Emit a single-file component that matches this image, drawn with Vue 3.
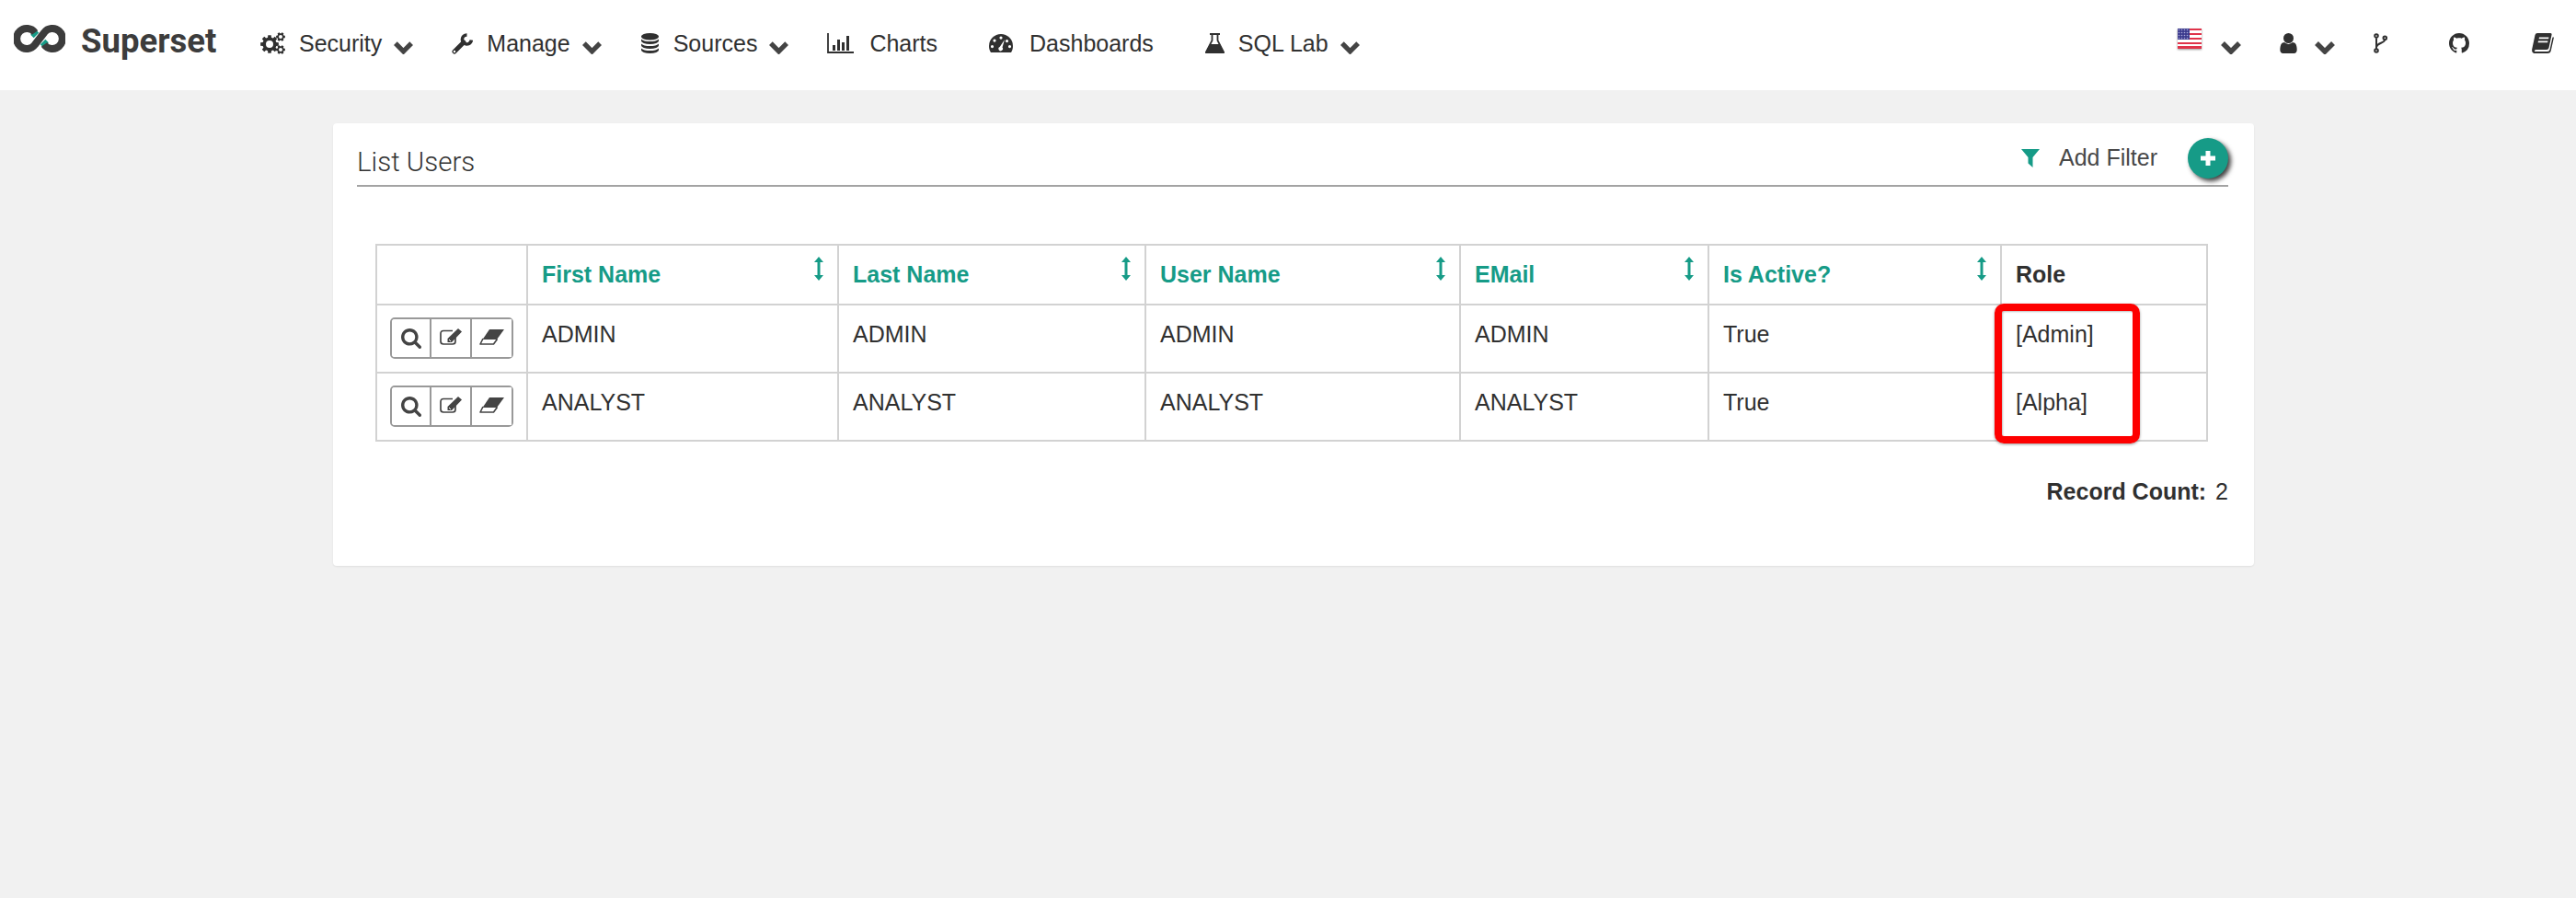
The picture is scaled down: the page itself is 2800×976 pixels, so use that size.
<script setup>
// gear outline with a hole in the middle, used three times in the Security icon
function gear(cx, cy, R, teeth, hole) {
  const pts = []
  const inner = R * 0.76
  const step = (Math.PI * 2) / teeth
  for (let i = 0; i < teeth; i++) {
    const a = i * step
    const w = step * 0.22
    const list = [
      [inner, a - w * 1.5],
      [R, a - w],
      [R, a + w],
      [inner, a + w * 1.5]
    ]
    list.forEach(([r, t]) => pts.push(`${(cx + r * Math.cos(t)).toFixed(2)} ${(cy + r * Math.sin(t)).toFixed(2)}`))
  }
  const ring = `M${cx - hole} ${cy}a${hole} ${hole} 0 1 0 ${hole * 2} 0a${hole} ${hole} 0 1 0 ${-hole * 2} 0z`
  return `M${pts.join('L')}z${ring}`
}

const line = { fill: 'none', stroke: 'currentColor' }

const icons = {
  gears: {
    vb: '0 0 27 24',
    shapes: [
      { d: gear(10, 13, 10, 8, 4), 'fill-rule': 'evenodd' },
      { d: gear(22, 5, 5, 6, 2), 'fill-rule': 'evenodd' },
      { d: gear(22, 19, 5, 6, 2), 'fill-rule': 'evenodd' }
    ]
  },
  wrench: {
    vb: '0 0 23 23',
    shapes: [
      { d: 'M3 20L13 10', ...line, 'stroke-width': 5, 'stroke-linecap': 'round' },
      { d: 'M16.5 2A5 5 0 1 0 21.4 7.5', ...line, 'stroke-width': 3.6 },
      { d: 'M3 18.800a1.200 1.200 0 1 0 0 2.400a1.200 1.200 0 1 0 0-2.400z', fill: '#fff' }
    ]
  },
  database: {
    vb: '0 0 21 23',
    shapes: [
      { d: 'M1 3.500a9.500 3.500 0 0 1 19 0v.5a9.500 3.500 0 0 1-19 0z' },
      { d: 'M1 6.500c2.500 3.400 16.500 3.400 19 0v2a9.500 3.500 0 0 1-19 0z' },
      { d: 'M1 11.500c2.500 3.400 16.500 3.400 19 0v2a9.500 3.500 0 0 1-19 0z' },
      { d: 'M1 16.500c2.500 3.400 16.500 3.400 19 0v2a9.500 3.500 0 0 1-19 0z' }
    ]
  },
  chart: {
    vb: '0 0 29 22',
    shapes: [
      { d: 'M1 0V21H29', ...line, 'stroke-width': 1.8 },
      { d: 'M6 13h3v6H6zM11 7h3v12h-3zM16 10h3v9h-3zM21 3h3v16h-3z' }
    ]
  },
  dashboard: {
    vb: '0 0 26 20',
    shapes: [
      { d: 'M13 0A13 13 0 0 0 0 13C0 16 .8 18 2 20H24C25.200 18 26 16 26 13A13 13 0 0 0 13 0Z' },
      {
        d: 'M13 2.500a1.600 1.600 0 1 0 0 3.200a1.600 1.600 0 1 0 0-3.200zM6 5.500a1.600 1.600 0 1 0 0 3.200a1.600 1.600 0 1 0 0-3.200zM3.500 12a1.600 1.600 0 1 0 0 3.200a1.600 1.600 0 1 0 0-3.200zM22.500 12a1.600 1.600 0 1 0 0 3.200a1.600 1.600 0 1 0 0-3.200zM19.500 6a1.600 1.600 0 1 0 0 3.200a1.600 1.600 0 1 0 0-3.200z',
        fill: '#fff'
      },
      { d: 'M17 6L14.500 14.500a2.300 2.300 0 1 1-2.800-.6z', fill: '#fff' }
    ]
  },
  flask: {
    vb: '0 0 21 22',
    shapes: [
      { d: 'M5 1H16', ...line, 'stroke-width': 2 },
      { d: 'M7.500 1V8L1 20.500H20L13.500 8V1', ...line, 'stroke-width': 1.8 },
      { d: 'M5 12H16L21 22H0Z' }
    ]
  },
  user: {
    vb: '256 128 1280 1536',
    shapes: [
      {
        d: 'M1536 1399q0 109-62.500 187t-150.500 78h-854q-88 0-150.500-78t-62.500-187q0-85 8.500-160.500t31.500-152 58.500-131 94-89 134.500-34.500q131 128 313 128t313-128q76 0 134.500 34.500t94 89 58.500 131 31.500 152 8.500 160.500zm-256-887q0 159-112.500 271.500t-271.500 112.500-271.500-112.500-112.500-271.500 112.500-271.500 271.500-112.500 271.500 112.500 112.500 271.500z'
      }
    ]
  },
  fork: {
    vb: '0 0 15 22',
    shapes: [
      {
        d: 'M3 1.200a1.800 1.800 0 1 0 0 3.600a1.800 1.800 0 1 0 0-3.600zM12.300 3.400a1.800 1.800 0 1 0 0 3.600a1.800 1.800 0 1 0 0-3.600zM3 17.200a1.800 1.800 0 1 0 0 3.600a1.800 1.800 0 1 0 0-3.600zM3 4.800V17.200M12.300 7C12 11 4 10.500 3 15',
        ...line,
        'stroke-width': 2
      }
    ]
  },
  github: {
    vb: '0 0 16 16',
    shapes: [
      {
        d: 'M8 0C3.580 0 0 3.580 0 8c0 3.540 2.290 6.530 5.470 7.590.4.070.55-.17.55-.38 0-.19-.01-.82-.01-1.490-2.010.37-2.530-.49-2.690-.94-.09-.23-.48-.94-.82-1.130-.28-.15-.68-.52-.01-.53.63-.01 1.080.58 1.230.82.72 1.210 1.870.87 2.330.66.07-.52.28-.87.51-1.070-1.780-.2-3.640-.89-3.640-3.950 0-.87.31-1.590.82-2.150-.08-.2-.36-1.020.08-2.120 0 0 .67-.21 2.200.82.64-.18 1.320-.27 2-.27.68 0 1.360.09 2 .27 1.530-1.040 2.200-.82 2.200-.82.44 1.100.16 1.920.08 2.120.51.56.82 1.270.82 2.150 0 3.070-1.870 3.750-3.650 3.950.29.25.54.73.54 1.480 0 1.070-.01 1.930-.01 2.200 0 .21.15.46.55.38A8.013 8.013 0 0016 8c0-4.420-3.580-8-8-8z'
      }
    ]
  },
  book: {
    vb: '0 0 24 22',
    shapes: [
      { d: 'M6 0H20Q22 0 21.500 2L18.500 16Q18 18 16 18H5Q2.500 18 3 20H17Q19 20 19.500 18L22.500 4.500H24L20.800 19Q20.300 22 17 22H4Q-.5 22 .2 17.500L3.500 2Q4 0 6 0Z' },
      { d: 'M8 4.500H18.500L18.100 6.200H7.600ZM7 8.500H17.500L17.100 10.200H6.600Z', fill: '#fff' }
    ]
  },
  search: {
    vb: '64 128 1664 1664',
    shapes: [
      {
        d: 'M1216 832q0-185-131.500-316.500t-316.500-131.500-316.500 131.500-131.500 316.500 131.500 316.500 316.500 131.500 316.500-131.500 131.500-316.500zm512 832q0 52-38 90t-90 38q-54 0-90-38l-343-342q-179 124-399 124-143 0-273.500-55.500t-225-150-150-225-55.500-273.500 55.500-273.500 150-225 225-150 273.500-55.500 273.500 55.500 225 150 150 225 55.500 273.500q0 220-124 399l343 343q37 37 37 90z'
      }
    ]
  },
  edit: {
    vb: '0 0 24 18',
    shapes: [
      { d: 'M14 2.500H4Q1 2.500 1 5.500V14Q1 17 4 17H14Q17 17 17 14V10', ...line, 'stroke-width': 1.7 },
      { d: 'M20 0L24 3.500L13 15H8.500V11Z' },
      { d: 'M10 12L12 14', fill: 'none', stroke: '#fff', 'stroke-width': 1 }
    ]
  },
  eraser: {
    vb: '0 0 27 17',
    shapes: [
      { d: 'M11 0H27L19 11H3.500Z' },
      { d: 'M4 10L1 16H15.500L19.500 10.500', ...line, 'stroke-width': 1.6, 'stroke-linejoin': 'round' }
    ]
  }
}

const leftMenu = [
  { label: 'Security', icon: 'gears', w: 27, h: 24, gap: 15, caret: true },
  { label: 'Manage', icon: 'wrench', w: 23, h: 23, gap: 15, caret: true },
  { label: 'Sources', icon: 'database', w: 21, h: 23, gap: 15, caret: true },
  { label: 'Charts', icon: 'chart', w: 29, h: 22, gap: 17, caret: false },
  { label: 'Dashboards', icon: 'dashboard', w: 26, h: 20, gap: 18, caret: false },
  { label: 'SQL Lab', icon: 'flask', w: 21, h: 22, gap: 15, caret: true }
]

const columns = [
  { label: 'First Name', sortable: true },
  { label: 'Last Name', sortable: true },
  { label: 'User Name', sortable: true },
  { label: 'EMail', sortable: true },
  { label: 'Is Active?', sortable: true },
  { label: 'Role', sortable: false }
]

const users = [
  { first: 'ADMIN', last: 'ADMIN', name: 'ADMIN', email: 'ADMIN', active: 'True', role: '[Admin]' },
  { first: 'ANALYST', last: 'ANALYST', name: 'ANALYST', email: 'ANALYST', active: 'True', role: '[Alpha]' }
]

const actions = ['search', 'edit', 'eraser']
</script>

<template>
  <div class="page">
    <header class="navbar">
      <a class="brand">
        <svg class="logo" viewBox="0 0 56 30" width="56" height="30">
          <path d="M21 8L35 22" fill="none" stroke="#169b87" stroke-width="8" />
          <path d="M21 22L35 8" fill="none" stroke="#fff" stroke-width="10" />
          <path
            d="M23 8.500A11 11 0 1 0 23 21.500L33 8.500A11 11 0 1 1 33 21.500"
            fill="none"
            stroke="#3c3c3c"
            stroke-width="8"
          />
        </svg>
        <span class="brand-name">Superset</span>
      </a>

      <nav class="menu">
        <a v-for="item in leftMenu" :key="item.label" class="menu-item" :class="{ plain: !item.caret }">
          <svg
            class="icon"
            :viewBox="icons[item.icon].vb"
            :width="item.w"
            :height="item.h"
            :style="{ marginRight: item.gap + 'px' }"
          >
            <path v-for="(s, i) in icons[item.icon].shapes" :key="i" v-bind="s" />
          </svg>
          <span>{{ item.label }}</span>
          <svg v-if="item.caret" class="caret" viewBox="0 0 24 16" width="23" height="16">
            <path d="M3 4L12 13L21 4" fill="none" stroke="currentColor" stroke-width="5.500" />
          </svg>
        </a>
      </nav>

      <nav class="menu-right">
        <svg class="flag" viewBox="0 0 26 22" width="26" height="22">
          <defs>
            <pattern id="stars" width="3" height="3" patternUnits="userSpaceOnUse">
              <rect width="3" height="3" fill="#3c3b8e" />
              <circle cx="1.500" cy="1.500" r=".8" fill="#a9a9d8" />
            </pattern>
          </defs>
          <rect width="26" height="22" rx="1" fill="#fff" />
          <rect y="0" width="26" height="2" fill="#e0334a" />
          <rect y="5" width="26" height="2" fill="#e0334a" />
          <rect y="10" width="26" height="2" fill="#e0334a" />
          <rect y="15" width="26" height="2" fill="#e0334a" />
          <rect y="19" width="26" height="3" fill="#e0334a" />
          <rect width="13" height="12" fill="url(#stars)" />
        </svg>
        <svg class="caret caret-lang" viewBox="0 0 24 16" width="24" height="16">
          <path d="M3 4L12 13L21 4" fill="none" stroke="currentColor" stroke-width="5.500" />
        </svg>
        <svg class="icon icon-user" :viewBox="icons.user.vb" width="19" height="22">
          <path v-for="(s, i) in icons.user.shapes" :key="i" v-bind="s" />
        </svg>
        <svg class="caret caret-user" viewBox="0 0 24 16" width="24" height="16">
          <path d="M3 4L12 13L21 4" fill="none" stroke="currentColor" stroke-width="5.500" />
        </svg>
        <svg class="icon icon-fork" :viewBox="icons.fork.vb" width="15" height="22">
          <path v-for="(s, i) in icons.fork.shapes" :key="i" v-bind="s" />
        </svg>
        <svg class="icon icon-github" :viewBox="icons.github.vb" width="22" height="22">
          <path v-for="(s, i) in icons.github.shapes" :key="i" v-bind="s" />
        </svg>
        <svg class="icon icon-book" :viewBox="icons.book.vb" width="24" height="22">
          <path v-for="(s, i) in icons.book.shapes" :key="i" v-bind="s" />
        </svg>
      </nav>
    </header>

    <main class="content">
      <section class="card">
        <div class="card-head">
          <h4 class="card-title">List Users</h4>
          <div class="filter-tools">
            <svg class="filter-icon" viewBox="0 0 20 20" width="20" height="20">
              <path d="M0 0H20L12.500 9V20L7.500 15.500V9Z" />
            </svg>
            <span class="filter-label">Add Filter</span>
            <button class="add-btn">
              <svg viewBox="0 0 20 20" width="20" height="20">
                <path d="M10 2V18M2 10H18" fill="none" stroke="#fff" stroke-width="5" />
              </svg>
            </button>
          </div>
        </div>

        <div class="table-wrap">
          <table class="users">
            <colgroup>
              <col class="c-actions" />
              <col class="c-first" />
              <col class="c-last" />
              <col class="c-name" />
              <col class="c-email" />
              <col class="c-active" />
              <col class="c-role" />
            </colgroup>
            <thead>
              <tr>
                <th></th>
                <th v-for="col in columns" :key="col.label" :class="{ link: col.sortable }">
                  <div class="th-inner">
                    <span>{{ col.label }}</span>
                    <svg v-if="col.sortable" class="sort" viewBox="0 0 10 26" width="10" height="26">
                      <path d="M5 0L10 6H6.500V20H10L5 26L0 20H3.500V6H0Z" />
                    </svg>
                  </div>
                </th>
              </tr>
            </thead>
            <tbody>
              <tr v-for="u in users" :key="u.first">
                <td class="actions">
                  <div class="btn-group">
                    <button v-for="a in actions" :key="a" class="act" :class="a">
                      <svg :viewBox="icons[a].vb" class="act-icon">
                        <path v-for="(s, i) in icons[a].shapes" :key="i" v-bind="s" />
                      </svg>
                    </button>
                  </div>
                </td>
                <td>{{ u.first }}</td>
                <td>{{ u.last }}</td>
                <td>{{ u.name }}</td>
                <td>{{ u.email }}</td>
                <td>{{ u.active }}</td>
                <td>{{ u.role }}</td>
              </tr>
            </tbody>
          </table>
          <div class="highlight"></div>
        </div>

        <div class="record-count"><b>Record Count:</b> 2</div>
      </section>
    </main>
  </div>
</template>

<style>
html,
body {
  margin: 0;
  background: #f1f1f1;
}
</style>

<style scoped>
.page {
  min-height: 976px;
  background: #f1f1f1;
  font-family: "Liberation Sans", Arial, sans-serif;
  font-size: 25px;
  line-height: 36px;
  color: #303030;
}

.navbar {
  height: 98px;
  background: #fff;
  display: flex;
  align-items: center;
  padding: 0 24px 0 15px;
  box-sizing: border-box;
}

.brand {
  display: flex;
  align-items: center;
  gap: 17px;
  margin-top: -14px;
}

.logo {
  display: block;
}

.brand-name {
  font-family: Roboto, "Liberation Sans", sans-serif;
  font-weight: 700;
  font-size: 36.500px;
  color: #3c3c3c;
  width: 149px;
  margin-top: 5px;
  white-space: nowrap;
}

.menu {
  display: flex;
  align-items: center;
  margin-left: 46px;
  margin-top: -4px;
}

.menu-item {
  display: flex;
  align-items: center;
  margin-right: 41px;
  white-space: nowrap;
}

.menu-item.plain {
  margin-right: 56px;
}

.icon {
  display: block;
  fill: currentColor;
  flex: none;
}

.caret {
  display: block;
  flex: none;
  color: #444;
  margin-left: 12px;
  margin-top: 8px;
}

.menu-right {
  margin-left: auto;
  display: flex;
  align-items: center;
  margin-top: -4px;
}

.flag {
  display: block;
  margin-top: -10px;
  filter: drop-shadow(0 1px 1px rgba(0, 0, 0, 0.4));
}

.caret-lang {
  margin-left: 20px;
  margin-top: 8px;
}

.icon-user {
  margin-left: 41px;
}

.caret-user {
  margin-left: 18px;
}

.icon-fork {
  margin-left: 41px;
}

.icon-github {
  margin-left: 67px;
}

.icon-book {
  margin-left: 68px;
}

.content {
  padding-top: 36px;
  display: flex;
  justify-content: center;
}

.card {
  width: 2088px;
  margin-left: 12px;
  box-sizing: border-box;
  background: #fff;
  border-radius: 4px;
  padding: 16px 28px 63px 26px;
  box-shadow: 0 1px 2px rgba(0, 0, 0, 0.08);
}

.card-head {
  display: flex;
  align-items: flex-end;
  justify-content: space-between;
  height: 51px;
  border-bottom: 2px solid #a3a3a3;
}

.card-title {
  margin: 0 0 7px 0;
  font-family: Roboto, "Liberation Sans", sans-serif;
  font-weight: 300;
  font-size: 29.500px;
  line-height: 36px;
  color: #333;
}

.filter-tools {
  display: flex;
  align-items: flex-start;
  height: 51px;
}

.filter-icon {
  display: block;
  fill: #169b87;
  margin-top: 12px;
  margin-right: 21px;
}

.filter-label {
  color: #484848;
  margin-top: 3px;
  margin-right: 33px;
}

.add-btn {
  width: 44px;
  height: 44px;
  padding: 0;
  border: none;
  border-radius: 50%;
  background: #169b87;
  display: flex;
  align-items: center;
  justify-content: center;
  box-shadow: 3px 3px 5px rgba(0, 0, 0, 0.75);
}

.table-wrap {
  position: relative;
  margin: 62px 22px 0 20px;
}

.users {
  width: 1992px;
  table-layout: fixed;
  border-collapse: collapse;
}

.c-actions { width: 164px; }
.c-first { width: 338px; }
.c-last { width: 334px; }
.c-name { width: 342px; }
.c-email { width: 270px; }
.c-active { width: 318px; }
.c-role { width: 224px; }

.users th,
.users td {
  border: 2px solid #d2d2d2;
  padding: 13px 15px 0;
  vertical-align: top;
  text-align: left;
  box-sizing: border-box;
}

.users th {
  height: 65px;
  font-weight: 700;
}

.users td {
  height: 74px;
}

.users th.link {
  color: #169b87;
}

.th-inner {
  display: flex;
  justify-content: space-between;
  align-items: flex-start;
}

.sort {
  display: block;
  fill: #169b87;
  margin-top: -1px;
}

.users td.actions {
  padding: 13px 14px 0 14px;
}

.btn-group {
  display: flex;
  width: 134px;
  height: 45px;
  box-sizing: border-box;
  border: 2px solid #999;
  border-radius: 5px;
}

.act {
  flex: 1 1 auto;
  padding: 0;
  border: none;
  background: #fff;
  display: flex;
  align-items: center;
  justify-content: center;
  color: #444;
  border-radius: 3px;
}

.act + .act {
  border-left: 2px solid #999;
  border-radius: 0;
}

.act.search { width: 41px; flex: none; }
.act.edit { width: 44px; flex: none; }

.act-icon {
  display: block;
  fill: currentColor;
}

.act.search .act-icon { width: 22px; height: 22px; }
.act.edit .act-icon { width: 24px; height: 18px; margin-top: -3px; }
.act.eraser .act-icon { width: 27px; height: 17px; margin-top: -2px; }

.highlight {
  position: absolute;
  left: 1760px;
  top: 65px;
  width: 158px;
  height: 152px;
  box-sizing: border-box;
  border: 8px solid #fe0000;
  border-radius: 10px;
  box-shadow: 0 1px 3px rgba(0, 0, 0, 0.4), inset 1px 1px 2px rgba(0, 0, 0, 0.25);
}

.record-count {
  margin-top: 36px;
  text-align: right;
}

.record-count b {
  margin-right: 3px;
}
</style>
